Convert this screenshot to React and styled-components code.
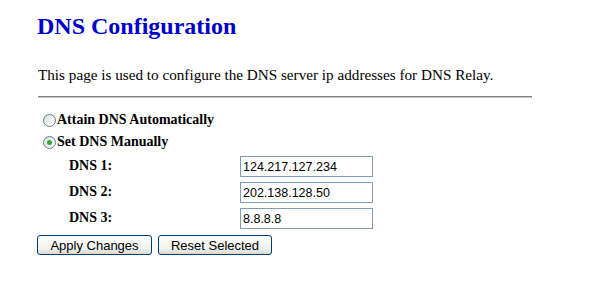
import React, { useState } from "react";
import styled, { createGlobalStyle } from "styled-components";

const GlobalStyle = createGlobalStyle`
  body {
    margin: 0;
    background: #ffffff;
    font-family: "Liberation Serif", "Times New Roman", serif;
  }
`;

const Page = styled.div`
  padding: 12px 0 0 37px;
  width: 495px;
`;

const Title = styled.h2`
  margin: 0;
  font-size: 24px;
  line-height: 28px;
  font-weight: bold;
  color: #0000cc;
`;

const Intro = styled.p`
  margin: 26px 0 0 1px;
  font-size: 15.2px;
  line-height: 18px;
  color: #000;
`;

const Rule = styled.hr`
  margin: 12px 0 0 1px;
  border: 0;
  border-top: 1px solid #808080;
  border-bottom: 1px solid #c8c8c8;
  height: 0;
`;

const Form = styled.div`
  margin-top: 11px;
  display: flex;
  flex-direction: column;
`;

const RadioRow = styled.label`
  display: flex;
  align-items: center;
  gap: 1px;
  height: 22px;
  padding-left: 6px;
  font-size: 14px;
  font-weight: bold;
  color: #000;
`;

const RadioDot = styled.span`
  width: 11px;
  height: 11px;
  border-radius: 50%;
  border: 1px solid #5a7a9c;
  background: linear-gradient(135deg, #dcdcd6 0%, #ffffff 80%);
  display: flex;
  align-items: center;
  justify-content: center;

  &::after {
    content: "";
    width: 5px;
    height: 5px;
    border-radius: 50%;
    background: ${(p) => (p.$checked ? "#3aa33a" : "transparent")};
  }
`;

const FieldRow = styled.div`
  display: grid;
  grid-template-columns: 171px 133px;
  align-items: center;
  height: 26px;
  padding-left: 32px;
`;

const FieldLabel = styled.span`
  font-size: 14px;
  font-weight: bold;
  color: #000;
`;

const TextBox = styled.input`
  box-sizing: border-box;
  width: 133px;
  height: 21px;
  margin: 0;
  padding: 1px 2px 0;
  border: 1px solid #7f9db9;
  font-family: "Liberation Sans", Arial, sans-serif;
  font-size: 12.5px;
  color: #000;
  outline: none;
`;

const Buttons = styled.div`
  display: flex;
  gap: 6px;
  margin-top: 4px;
`;

const Button = styled.button`
  box-sizing: border-box;
  height: 20px;
  width: ${(p) => p.$w}px;
  padding: 0;
  border: 1px solid #003c74;
  border-radius: 3px;
  background: linear-gradient(180deg, #ffffff 0%, #f1f1ed 70%, #d9d9d2 100%);
  font-family: "Liberation Sans", Arial, sans-serif;
  font-size: 13px;
  color: #000;
`;

const servers = [
  { label: "DNS 1:", value: "124.217.127.234" },
  { label: "DNS 2:", value: "202.138.128.50" },
  { label: "DNS 3:", value: "8.8.8.8" },
];

export default function App() {
  const [mode, setMode] = useState("manual");

  return (
    <Page>
      <GlobalStyle />
      <Title>DNS Configuration</Title>
      <Intro>
        This page is used to configure the DNS server ip addresses for DNS Relay.
      </Intro>
      <Rule />
      <Form>
        <RadioRow onClick={() => setMode("auto")}>
          <RadioDot $checked={mode === "auto"} />
          Attain DNS Automatically
        </RadioRow>
        <RadioRow onClick={() => setMode("manual")}>
          <RadioDot $checked={mode === "manual"} />
          Set DNS Manually
        </RadioRow>
        {servers.map((s) => (
          <FieldRow key={s.label}>
            <FieldLabel>{s.label}</FieldLabel>
            <TextBox defaultValue={s.value} />
          </FieldRow>
        ))}
        <Buttons>
          <Button $w={115}>Apply Changes</Button>
          <Button $w={114}>Reset Selected</Button>
        </Buttons>
      </Form>
    </Page>
  );
}
